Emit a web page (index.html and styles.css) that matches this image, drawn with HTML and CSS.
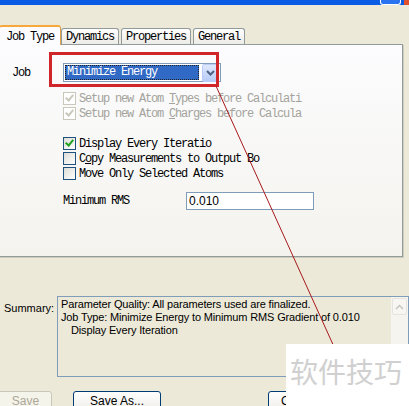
FILE: index.html
```html
<!DOCTYPE html>
<html lang="en">
<head>
  <meta charset="UTF-8" />
  <title>Minimization Options</title>
  <link rel="stylesheet" href="styles.css">
</head>
<body>
  <div class="window">
    <div class="titlebar">
      <span class="tb-btn"></span>
      <span class="tb-close"></span>
    </div>

    <div class="tabs">
      <div class="tab active">Job Type</div>
      <div class="tab">Dynamics</div>
      <div class="tab">Properties</div>
      <div class="tab">General</div>
    </div>

    <div class="panel">
      <div class="job-row">
        <span class="job-label">Job</span>
        <div class="select">
          <span class="select-value">Minimize Energy</span>
          <span class="select-btn">
            <svg width="9" height="6" viewBox="0 0 9 6"><path d="M1 1 L4.5 4.5 L8 1" fill="none" stroke="#4d6185" stroke-width="2"/></svg>
          </span>
        </div>
      </div>

      <!-- labels are cut short by the dialog, as in the original -->
      <div class="checks disabled">
        <div class="check"><span class="box on"></span><span class="lbl">Setup new Atom <u>T</u>ypes before Calculati</span></div>
        <div class="check"><span class="box on"></span><span class="lbl">Setup new Atom <u>C</u>harges before Calcula</span></div>
      </div>

      <div class="checks">
        <div class="check"><span class="box on"></span><span class="lbl">Display Every Iteratio</span></div>
        <div class="check"><span class="box"></span><span class="lbl">C<u>o</u>py Measurements to Output Bo</span></div>
        <div class="check"><span class="box"></span><span class="lbl">Move Only Selected Atoms</span></div>
      </div>

      <div class="rms-row">
        <span class="rms-label">Minimum RMS</span>
        <div class="textbox">0.010</div>
      </div>
    </div>

    <div class="summary-row">
      <span class="summary-label">Summary:</span>
      <div class="summary-box">
        <div class="summary-text">
          Parameter Quality: All parameters used are finalized.<br>
          Job Type: Minimize Energy to Minimum RMS Gradient of 0.010<br>
          <span class="indent">Display Every Iteration</span>
        </div>
        <div class="scrollbar">
          <span class="scroll-up">
            <svg width="9" height="6" viewBox="0 0 9 6"><path d="M1 5 L4.5 1.5 L8 5" fill="none" stroke="#c8c6bc" stroke-width="1.5"/></svg>
          </span>
        </div>
      </div>
    </div>

    <div class="buttons">
      <button class="btn btn-save" disabled>Save</button>
      <button class="btn btn-saveas">Save As...</button>
      <button class="btn btn-close">Close</button>
    </div>

    <!-- annotation drawn over the dialog -->
    <svg class="annot" width="409" height="406" viewBox="0 0 409 406">
      <rect x="50.5" y="53.5" width="167" height="32" fill="none" stroke="#d0262a" stroke-width="3"/>
      <line x1="216" y1="86" x2="340" y2="360" stroke="#a8191c" stroke-width="1"/>
    </svg>

    <div class="watermark">软件技巧</div>
  </div>
</body>
</html>
```

FILE: styles.css
```css
body {
  margin: 0;
  background: #ece9d8;
  font-family: 'Liberation Mono', monospace;
  font-size: 12px;
  color: #000;
}

.window {
  position: relative;
  width: 409px;
  height: 406px;
  overflow: hidden;
}

.titlebar {
  height: 5px;
  background: #0b5ce5;
  display: flex;
  justify-content: flex-end;
}

.tb-btn {
  width: 19px;
  height: 4px;
  margin-right: 3px;
  border: 1px solid #fff;
  border-top: none;
  border-radius: 0 0 3px 3px;
  background: #2a73f0;
}

.tb-close {
  width: 5px;
  height: 5px;
  background: #e0522e;
}

/* tabs */
.tabs {
  display: flex;
  align-items: flex-end;
  height: 19px;
  margin-top: 20px;
  position: relative;
  z-index: 1;
}

.tab {
  height: 15px;
  line-height: 17px;
  padding: 0 4px;
  border: 1px solid #919b9c;
  border-bottom: none;
  border-radius: 3px 3px 0 0;
  background: linear-gradient(#ffffff, #ecebe6);
  letter-spacing: -1.2px;
  text-align: center;
  margin-left: 2px;
}

.tab.active {
  height: 18px;
  line-height: 21px;
  width: 60px;
  padding: 0;
  margin-left: -1px;
  margin-bottom: -1px;
  border-top: 2px solid #f6a93a;
  border-left: 1px solid #e2a24a;
  border-right: 1px solid #e2a24a;
  background: #fcfcfe;
}

.tab.active + .tab {
  margin-left: 0;
}

/* panel */
.panel {
  height: 211px;
  width: 402px;
  margin-left: -1px;
  border: 1px solid #919b9c;
  background: linear-gradient(#fcfcfe, #f4f3ee);
  box-shadow: 1px 1px 0 #d0cdbe;
  letter-spacing: -1.2px;
}

.job-row {
  display: flex;
  align-items: center;
  margin-top: 18px;
  padding-left: 12px;
}

.job-label {
  width: 51px;
}

.select {
  display: flex;
  align-items: center;
  width: 154px;
  height: 17px;
  border: 1px solid #7f9db9;
  background: #fff;
  padding: 0 1px;
  gap: 3px;
}

.select-value {
  flex: 1;
  height: 15px;
  line-height: 15px;
  padding-left: 2px;
  background: #316ac5;
  color: #fff;
  outline: 1px dotted #222;
  outline-offset: -1px;
}

.select-btn {
  width: 15px;
  height: 16px;
  border: 1px solid #b9cbf7;
  border-radius: 2px;
  background: linear-gradient(#dfe8fd, #b7cbf6);
  display: flex;
  align-items: center;
  justify-content: center;
}

.checks {
  margin-top: 9px;
  padding-left: 63px;
}

.checks + .checks {
  margin-top: 15px;
}

.check {
  display: flex;
  align-items: center;
  height: 15px;
  gap: 3px;
}

.box {
  width: 11px;
  height: 11px;
  border: 1px solid #1c5180;
  background: linear-gradient(135deg, #dcdcd7, #ffffff);
  position: relative;
  flex-shrink: 0;
}

.box.on::after {
  content: '';
  position: absolute;
  left: 3px;
  top: 0px;
  width: 3px;
  height: 6px;
  border: solid #21a121;
  border-width: 0 2px 2px 0;
  transform: rotate(40deg);
}

.disabled .box {
  border-color: #cac8bb;
  background: #fff;
}

.disabled .box.on::after {
  border-color: #cac8bb;
}

.disabled .lbl {
  color: #a3a39c;
}

.lbl {
  white-space: nowrap;
}

.rms-row {
  display: flex;
  align-items: center;
  margin-top: 11px;
  padding-left: 63px;
}

.rms-label {
  width: 123px;
}

.textbox {
  width: 124px;
  height: 16px;
  line-height: 17px;
  padding-left: 2px;
  border: 1px solid #7f9db9;
  background: #fff;
  font-family: 'Liberation Sans', sans-serif;
  font-size: 12px;
  letter-spacing: 0;
}

/* summary */
.summary-row {
  display: flex;
  margin-top: 39px;
  font-family: 'Liberation Sans', sans-serif;
  font-size: 11px;
}

.summary-label {
  width: 59px;
  padding-left: 4px;
  padding-top: 6px;
}

.summary-box {
  display: flex;
  width: 350px;
  height: 79px;
  border: 1px solid #7f9db9;
  flex-shrink: 0;
}

.summary-text {
  flex: 1;
  padding: 1px 0 0 3px;
  line-height: 13px;
  letter-spacing: -0.15px;
}

.indent {
  padding-left: 10px;
}

.scrollbar {
  width: 17px;
  background: #f5f4ef;
}

.scroll-up {
  display: flex;
  align-items: center;
  justify-content: center;
  height: 15px;
  margin: 1px;
  border: 1px solid #e6e4dc;
  border-radius: 2px;
  background: #f7f6f2;
}

/* buttons */
.buttons {
  display: flex;
  margin-top: 14px;
}

.btn {
  height: 23px;
  font-family: 'Liberation Sans', sans-serif;
  font-size: 12px;
  border: 1px solid #003c74;
  border-radius: 3px;
  background: linear-gradient(#ffffff, #ecebe6);
  padding: 0 0 3px;
  color: #000;
}

.btn-save {
  width: 75px;
  margin-left: -23px;
  padding-left: 22px;
  border-color: #c9c7ba;
  color: #aca899;
  background: #f5f4ea;
}

.btn-saveas {
  width: 88px;
  margin-left: 21px;
}

.btn-close {
  width: 75px;
  margin-left: 107px;
  text-align: left;
  padding-left: 12px;
}

/* overlays */
.annot {
  position: absolute;
  left: 0;
  top: 0;
}

.watermark {
  position: absolute;
  left: 286px;
  top: 344px;
  width: 123px;
  height: 62px;
  background: #fff;
  color: #d0d0d0;
  font-family: 'Noto Sans CJK SC', sans-serif;
  font-size: 28px;
  line-height: 28px;
  padding: 13px 0 0 4px;
  box-sizing: border-box;
}
```
